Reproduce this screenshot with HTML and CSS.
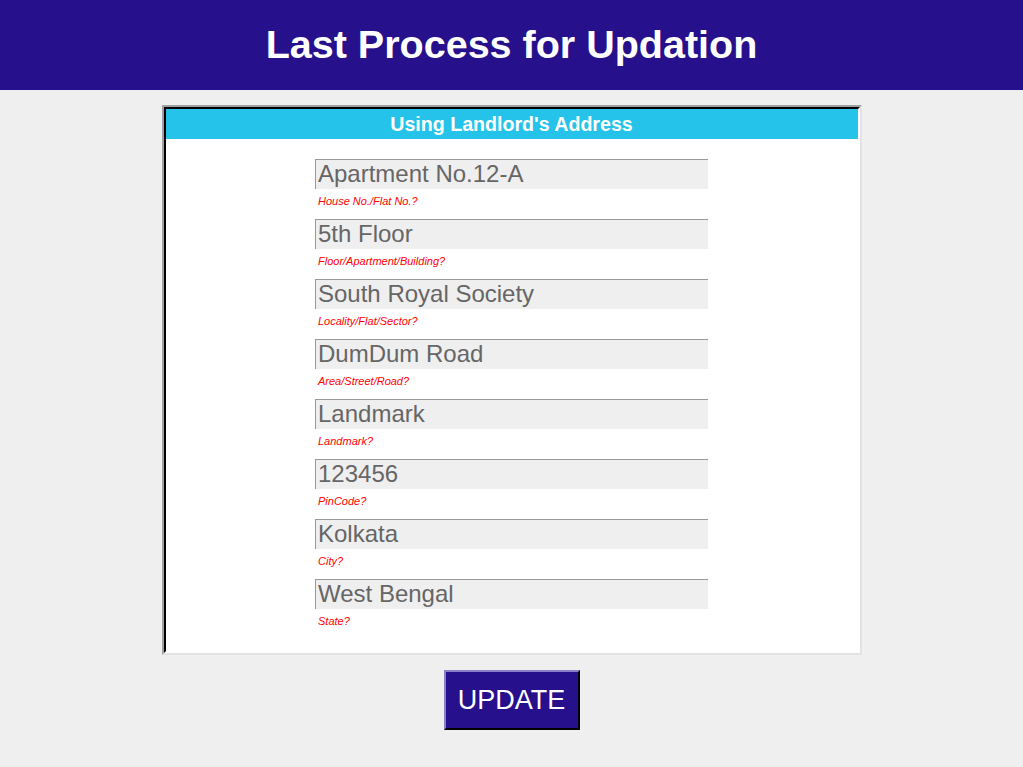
FILE: index.html
```html
<!DOCTYPE html>
<html>
<head>
<meta charset="utf-8">
<link rel="stylesheet" href="styles.css">
</head>
<body>
<header class="top-bar">
  <h1 class="title">Last Process for Updation</h1>
</header>
<main class="main">
  <section class="card">
    <div class="card-inner">
      <h2 class="card-head">Using Landlord's Address</h2>
      <form class="form">
        <div class="field"><input class="inp" type="text" value="Apartment No.12-A"><span class="hint">House No./Flat No.?</span></div>
        <div class="field"><input class="inp" type="text" value="5th Floor"><span class="hint">Floor/Apartment/Building?</span></div>
        <div class="field"><input class="inp" type="text" value="South Royal Society"><span class="hint">Locality/Flat/Sector?</span></div>
        <div class="field"><input class="inp" type="text" value="DumDum Road"><span class="hint">Area/Street/Road?</span></div>
        <div class="field"><input class="inp" type="text" value="Landmark"><span class="hint">Landmark?</span></div>
        <div class="field"><input class="inp" type="text" value="123456"><span class="hint">PinCode?</span></div>
        <div class="field"><input class="inp" type="text" value="Kolkata"><span class="hint">City?</span></div>
        <div class="field"><input class="inp" type="text" value="West Bengal"><span class="hint">State?</span></div>
      </form>
    </div>
  </section>
  <button class="btn" type="button">UPDATE</button>
</main>
</body>
</html>
```

FILE: styles.css
```css
* { box-sizing: border-box; }
html, body { margin: 0; padding: 0; }
body {
  background: #efefef;
  font-family: "Liberation Sans", Arial, sans-serif;
}
.top-bar {
  background: #26108c;
  height: 90px;
  display: flex;
  align-items: center;
  justify-content: center;
}
.title {
  margin: 0;
  color: #fff;
  font-size: 39.5px;
  font-weight: bold;
  line-height: 1;
}
.main {
  display: flex;
  flex-direction: column;
  align-items: center;
  padding-top: 15px;
}
.card {
  width: 700px;
  height: 550px;
  border: 2px solid;
  border-color: #a0a0a0 #e3e3e3 #e3e3e3 #a0a0a0;
  background: #fff;
}
.card-inner {
  height: 100%;
  border: 2px solid;
  border-color: #000 #fff #fff #000;
  background: #fff;
}
.card-head {
  margin: 0;
  height: 30px;
  background: #25c3ea;
  color: #fff;
  font-size: 19.6px;
  font-weight: bold;
  text-align: center;
  line-height: 30px;
}
.form {
  display: flex;
  flex-direction: column;
  align-items: center;
  padding-top: 20px;
}
.field {
  width: 393px;
  height: 60px;
  display: flex;
  flex-direction: column;
}
.inp {
  width: 393px;
  height: 30px;
  margin: 0;
  border: none;
  border-top: 1px solid #999;
  border-left: 1px solid #999;
  background: #efefef;
  color: #666;
  font-family: "Liberation Sans", Arial, sans-serif;
  font-size: 24px;
  padding: 0 0 2px 2px;
  outline: none;
}
.hint {
  margin-top: 6px;
  padding-left: 3px;
  color: #f00;
  font-size: 11px;
  font-style: italic;
  line-height: 13px;
}
.btn {
  margin-top: 15px;
  width: 136px;
  height: 60px;
  background: #26108c;
  color: #fff;
  border: 2px solid;
  border-color: #8a80c8 #000 #000 #8a80c8;
  font-family: "Liberation Sans", Arial, sans-serif;
  font-size: 27px;
  padding: 0;
}
```
